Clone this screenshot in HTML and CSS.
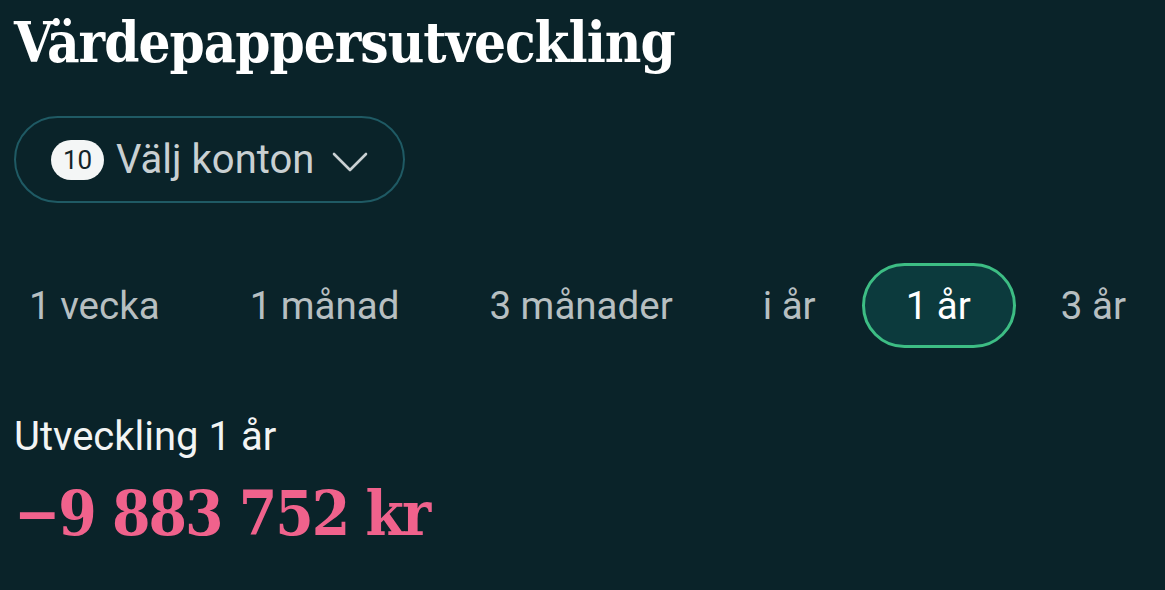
FILE: index.html
```html
<!DOCTYPE html>
<html lang="sv">
<head>
<meta charset="utf-8">
<link rel="stylesheet" href="styles.css">
</head>
<body>
<main class="page">
  <h1 class="title">Värdepappersutveckling</h1>
  <button class="accounts">
    <span class="badge">10</span>
    <span class="accounts-label">Välj konton</span>
    <svg class="chevron" viewBox="0 0 36 22" width="36" height="22"><path d="M2 3 L18 19 L34 3" fill="none" stroke="#c9d0d2" stroke-width="2.6" stroke-linecap="round" stroke-linejoin="round"/></svg>
  </button>
  <nav class="tabs">
    <span class="tab">1 vecka</span>
    <span class="tab">1 månad</span>
    <span class="tab">3 månader</span>
    <span class="tab">i år</span>
    <span class="tab active">1 år</span>
    <span class="tab">3 år</span>
  </nav>
  <div class="result-label">Utveckling 1 år</div>
  <div class="result-value">−9 883 752 kr</div>
</main>
</body>
</html>
```
FILE: styles.css
```css
html, body {
  margin: 0;
  padding: 0;
  background: #0a2329;
  overflow: hidden;
}
.page {
  padding: 0 14px;
  font-family: Roboto, "Noto Sans", sans-serif;
}
.title {
  margin: 0;
  padding-top: 7px;
  font-family: "DejaVu Serif", serif;
  font-stretch: condensed;
  font-weight: bold;
  font-size: 56px;
  line-height: 70px;
  color: #ffffff;
  letter-spacing: -1px;
}
.accounts {
  margin-top: 39px;
  display: flex;
  align-items: center;
  width: 391px;
  height: 87px;
  padding: 0 0 0 35px;
  background: transparent;
  border: 2px solid #1f5a64;
  border-radius: 44px;
  font-family: Roboto, sans-serif;
  cursor: pointer;
}
.badge {
  display: flex;
  align-items: center;
  justify-content: center;
  width: 53px;
  height: 40px;
  border-radius: 20px;
  background: #f4f6f6;
  color: #142428;
  font-size: 26px;
}
.accounts-label {
  margin-left: 12px;
  font-size: 40px;
  color: #c9d0d2;
}
.chevron {
  margin-left: 18px;
  margin-top: 4px;
}
.tabs {
  display: flex;
  gap: 1px;
  margin-top: 60px;
  margin-left: -29px;
}
.tab {
  display: flex;
  align-items: center;
  height: 85px;
  padding: 0 42px 0 41px;
  box-sizing: border-box;
  border: 3px solid transparent;
  border-radius: 43px;
  font-size: 38.5px;
  color: #b7bfc1;
  white-space: nowrap;
}
.tab.active {
  border-color: #3dbd84;
  background: #0c3a3d;
  color: #ffffff;
}
.result-label {
  margin-top: 64px;
  font-size: 40px;
  color: #f2f4f4;
  line-height: 50px;
}
.result-value {
  margin-top: 14px;
  font-family: "DejaVu Serif", serif;
  font-stretch: condensed;
  font-weight: bold;
  font-size: 61.5px;
  line-height: 76px;
  color: #f0628c;
  letter-spacing: -2px;
}
```
